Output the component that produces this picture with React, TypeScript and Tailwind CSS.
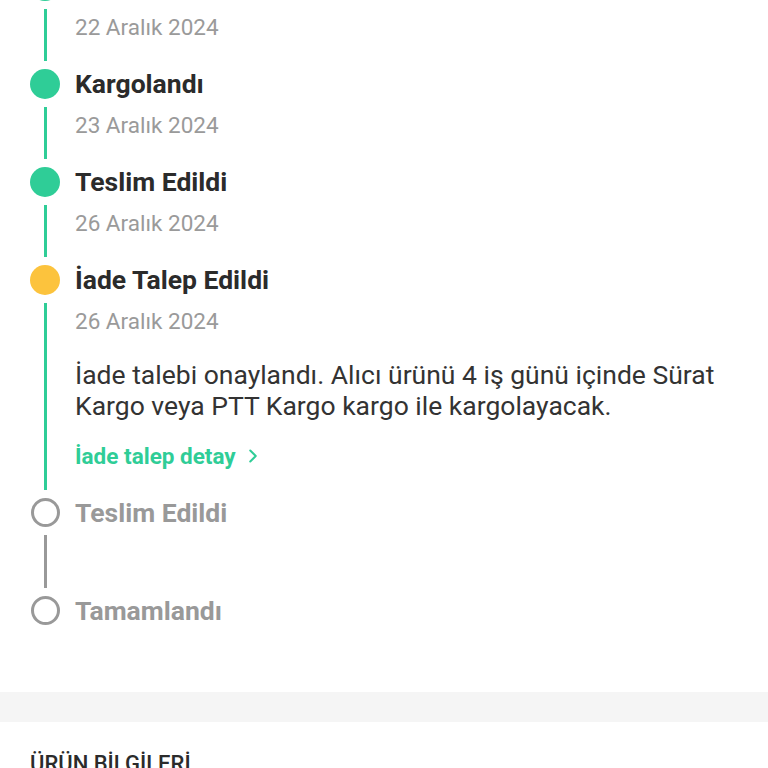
import { ChevronRight } from 'lucide-react';

type Step = {
  title: string;
  date?: string;
  state: 'done' | 'current' | 'pending';
  note?: string;
  link?: string;
};

const steps: Step[] = [
  { title: 'Sipariş Alındı', date: '22 Aralık 2024', state: 'done' },
  { title: 'Kargolandı', date: '23 Aralık 2024', state: 'done' },
  { title: 'Teslim Edildi', date: '26 Aralık 2024', state: 'done' },
  {
    title: 'İade Talep Edildi',
    date: '26 Aralık 2024',
    state: 'current',
    note: 'İade talebi onaylandı. Alıcı ürünü 4 iş günü içinde Sürat Kargo veya PTT Kargo kargo ile kargolayacak.',
    link: 'İade talep detay',
  },
  { title: 'Teslim Edildi', state: 'pending' },
  { title: 'Tamamlandı', state: 'pending' },
];

function Dot({ state }: { state: Step['state'] }) {
  if (state === 'pending') {
    return <div className="w-[29px] h-[29px] rounded-full border-[3px] border-[#999999] bg-white" />;
  }
  return (
    <div
      className={`w-[30px] h-[30px] rounded-full ${
        state === 'current' ? 'bg-[#fcc33d]' : 'bg-[#2fcd97]'
      }`}
    />
  );
}

export default function App() {
  return (
    <div className="min-h-screen bg-white font-['Roboto',sans-serif]">
      <div className="px-[30px] mt-[-29px]">
        {steps.map((step, i) => {
          const last = i === steps.length - 1;
          const lineColor = step.state === 'pending' ? 'bg-[#999999]' : 'bg-[#2fcd97]';
          return (
            <div key={i} className="flex gap-[15px]">
              <div className="w-[30px] flex flex-col items-center">
                <Dot state={step.state} />
                {!last && <div className={`w-[3px] flex-1 my-2 ${lineColor}`} />}
              </div>
              <div className={`flex-1 ${last ? 'pb-0' : 'pb-[28px]'}`}>
                <div
                  className={`h-[30px] leading-[30px] text-[26.5px] font-bold whitespace-nowrap ${
                    step.state === 'pending' ? 'text-[#999999]' : 'text-[#2b2b2b]'
                  }`}
                >
                  {step.title}
                </div>
                {step.date && (
                  <div className="mt-3 text-[22.5px] leading-[28px] text-[#9a9a9a]">{step.date}</div>
                )}
                {step.note && (
                  <p className="mt-6 text-[26.5px] leading-[31px] text-[#333333] pr-[20px]">
                    {step.note}
                  </p>
                )}
                {step.link && (
                  <a className="mt-[21px] flex items-center gap-[6px] text-[22.5px] leading-[28px] font-bold text-[#2fcd97]">
                    {step.link}
                    <ChevronRight size={22} strokeWidth={2.2} />
                  </a>
                )}
                {step.state === 'pending' && !last && <div className="h-[40px]" />}
              </div>
            </div>
          );
        })}
      </div>
      <div className="mt-[66px] h-[30px] bg-[#f5f5f5]" />
      <div className="px-[30px] pt-[28px] pb-6">
        <h2 className="text-[22px] leading-[28px] font-medium text-[#2b2b2b]">ÜRÜN BİLGİLERİ</h2>
      </div>
    </div>
  );
}
